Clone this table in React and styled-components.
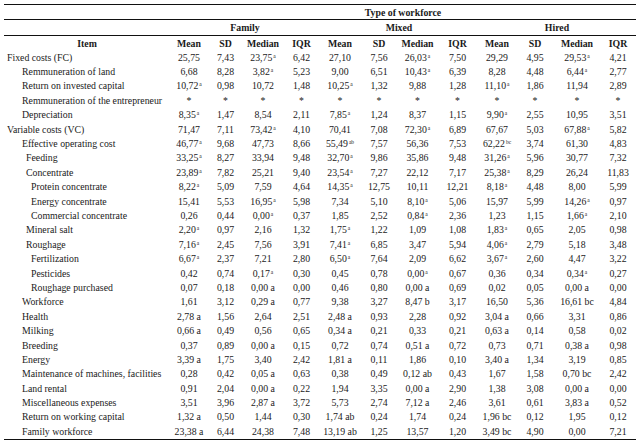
import React from 'react';
import styled, { createGlobalStyle } from 'styled-components';

const COLUMNS = '166px 38px 35px 40px 37px 40px 38px 39px 41px 38px 38px 46px 36px';

const GlobalStyle = createGlobalStyle`
  html, body {
    margin: 0;
    background: #ffffff;
  }
  body {
    font-family: "Liberation Serif", "Times New Roman", serif;
    color: #1a1a1a;
  }
`;

const Page = styled.div`
  padding: 4px 0 0 4px;
  width: 632px;
`;

const Table = styled.div`
  border-top: 1px solid #111;
  border-bottom: 1px solid #111;
  font-size: 9.8px;
`;

const Row = styled.div`
  display: grid;
  grid-template-columns: ${COLUMNS};
  height: ${({ $height }) => $height || 14.4}px;
  align-items: center;
  border-bottom: ${({ $ruled }) => ($ruled ? '1px solid #111' : 'none')};
`;

const GroupTitle = styled.div`
  grid-column: ${({ $span }) => $span};
  text-align: center;
  font-weight: bold;
`;

const HeadCell = styled.div`
  text-align: center;
  font-weight: bold;
`;

const ItemCell = styled.div`
  padding-left: ${({ $indent }) => $indent}px;
  white-space: nowrap;
`;

const Value = styled.div`
  text-align: center;
  white-space: nowrap;
`;

const Sup = styled.sup`
  font-size: 5.5px;
  vertical-align: 3px;
  line-height: 0;
  margin-left: 1px;
`;

const INDENT = [3, 18, 22, 27];

const rows = [
  ['Fixed costs (FC)', 0, '25,75|7,43|23,75^a|6,42|27,10|7,56|26,03^a|7,50|29,29|4,95|29,53^a|4,21'],
  ['Remmuneration of land', 1, '6,68|8,28|3,82^a|5,23|9,00|6,51|10,43^a|6,39|8,28|4,48|6,44^a|2,77'],
  ['Return on invested capital', 1, '10,72^a|0,98|10,72|1,48|10,25^a|1,32|9,88|1,28|11,10^a|1,86|11,94|2,89'],
  ['Remmuneration of the entrepreneur', 1, '*|*|*|*|*|*|*|*|*|*|*|*'],
  ['Depreciation', 1, '8,35^a|1,47|8,54|2,11|7,85^a|1,24|8,37|1,15|9,90^a|2,55|10,95|3,51'],
  ['Variable costs (VC)', 0, '71,47|7,11|73,42^a|4,10|70,41|7,08|72,30^a|6,89|67,67|5,03|67,88^a|5,82'],
  ['Effective operating cost', 1, '46,77^a|9,68|47,73|8,66|55,49^ab|7,57|56,36|7,53|62,22^bc|3,74|61,30|4,83'],
  ['Feeding', 2, '33,25^a|8,27|33,94|9,48|32,70^a|9,86|35,86|9,48|31,26^a|5,96|30,77|7,32'],
  ['Concentrate', 2, '23,89^a|7,82|25,21|9,40|23,54^a|7,27|22,12|7,17|25,38^a|8,29|26,24|11,83'],
  ['Protein concentrate', 3, '8,22^a|5,09|7,59|4,64|14,35^a|12,75|10,11|12,21|8,18^a|4,48|8,00|5,99'],
  ['Energy concentrate', 3, '15,41|5,53|16,95^a|5,98|7,34|5,10|8,10^a|5,06|15,97|5,99|14,26^a|0,97'],
  ['Commercial concentrate', 3, '0,26|0,44|0,00^a|0,37|1,85|2,52|0,84^a|2,36|1,23|1,15|1,66^a|2,10'],
  ['Mineral salt', 2, '2,20^a|0,97|2,16|1,32|1,75^a|1,22|1,09|1,08|1,83^a|0,65|2,05|0,98'],
  ['Roughage', 2, '7,16^a|2,45|7,56|3,91|7,41^a|6,85|3,47|5,94|4,06^a|2,79|5,18|3,48'],
  ['Fertilization', 3, '6,67^a|2,37|7,21|2,80|6,50^a|7,64|2,09|6,62|3,67^a|2,60|4,47|3,22'],
  ['Pesticides', 3, '0,42|0,74|0,17^a|0,30|0,45|0,78|0,00^a|0,67|0,36|0,34|0,34^a|0,27'],
  ['Roughage purchased', 3, '0,07|0,18|0,00 a|0,00|0,46|0,80|0,00 a|0,69|0,02|0,05|0,00 a|0,00'],
  ['Workforce', 1, '1,61|3,12|0,29 a|0,77|9,38|3,27|8,47 b|3,17|16,50|5,36|16,61 bc|4,84'],
  ['Health', 1, '2,78 a|1,56|2,64|2,51|2,48 a|0,93|2,28|0,92|3,04 a|0,66|3,31|0,86'],
  ['Milking', 1, '0,66 a|0,49|0,56|0,65|0,34 a|0,21|0,33|0,21|0,63 a|0,14|0,58|0,02'],
  ['Breeding', 1, '0,37|0,89|0,00 a|0,15|0,72|0,74|0,51 a|0,72|0,73|0,71|0,38 a|0,98'],
  ['Energy', 1, '3,39 a|1,75|3,40|2,42|1,81 a|0,11|1,86|0,10|3,40 a|1,34|3,19|0,85'],
  ['Maintenance of machines, facilities', 1, '0,28|0,42|0,05 a|0,63|0,38|0,49|0,12 ab|0,43|1,67|1,58|0,70 bc|2,42'],
  ['Land rental', 1, '0,91|2,04|0,00 a|0,22|1,94|3,35|0,00 a|2,90|1,38|3,08|0,00 a|0,00'],
  ['Miscellaneous expenses', 1, '3,51|3,96|2,87 a|3,72|5,73|2,74|7,12 a|2,46|3,61|0,61|3,83 a|0,52'],
  ['Return on working capital', 1, '1,32 a|0,50|1,44|0,30|1,74 ab|0,24|1,74|0,24|1,96 bc|0,12|1,95|0,12'],
  ['Family workforce', 1, '23,38 a|6,44|24,38|7,48|13,19 ab|1,25|13,57|1,20|3,49 bc|4,90|0,00|7,21'],
];

const GROUPS = [
  ['Family', '2 / 6'],
  ['Mixed', '6 / 10'],
  ['Hired', '10 / 14'],
];

const STATS = ['Mean', 'SD', 'Median', 'IQR'];

const Cell = ({ text }) => {
  const [num, mark] = text.split('^');
  return (
    <Value>
      {num}
      {mark && <Sup>{mark}</Sup>}
    </Value>
  );
};

const App = () => (
  <Page>
    <GlobalStyle />
    <Table>
      <Row $height={14} $ruled>
        <GroupTitle $span="2 / 14">Type of workforce</GroupTitle>
      </Row>
      <Row $height={15} $ruled>
        {GROUPS.map(([name, span]) => (
          <GroupTitle key={name} $span={span}>
            {name}
          </GroupTitle>
        ))}
      </Row>
      <Row $height={14}>
        <HeadCell>Item</HeadCell>
        {GROUPS.map(([name]) =>
          STATS.map((stat) => <HeadCell key={name + stat}>{stat}</HeadCell>)
        )}
      </Row>
      {rows.map(([label, level, values]) => (
        <Row key={label + level}>
          <ItemCell $indent={INDENT[level]}>{label}</ItemCell>
          {values.split('|').map((v, i) => (
            <Cell key={i} text={v} />
          ))}
        </Row>
      ))}
    </Table>
  </Page>
);

export default App;
